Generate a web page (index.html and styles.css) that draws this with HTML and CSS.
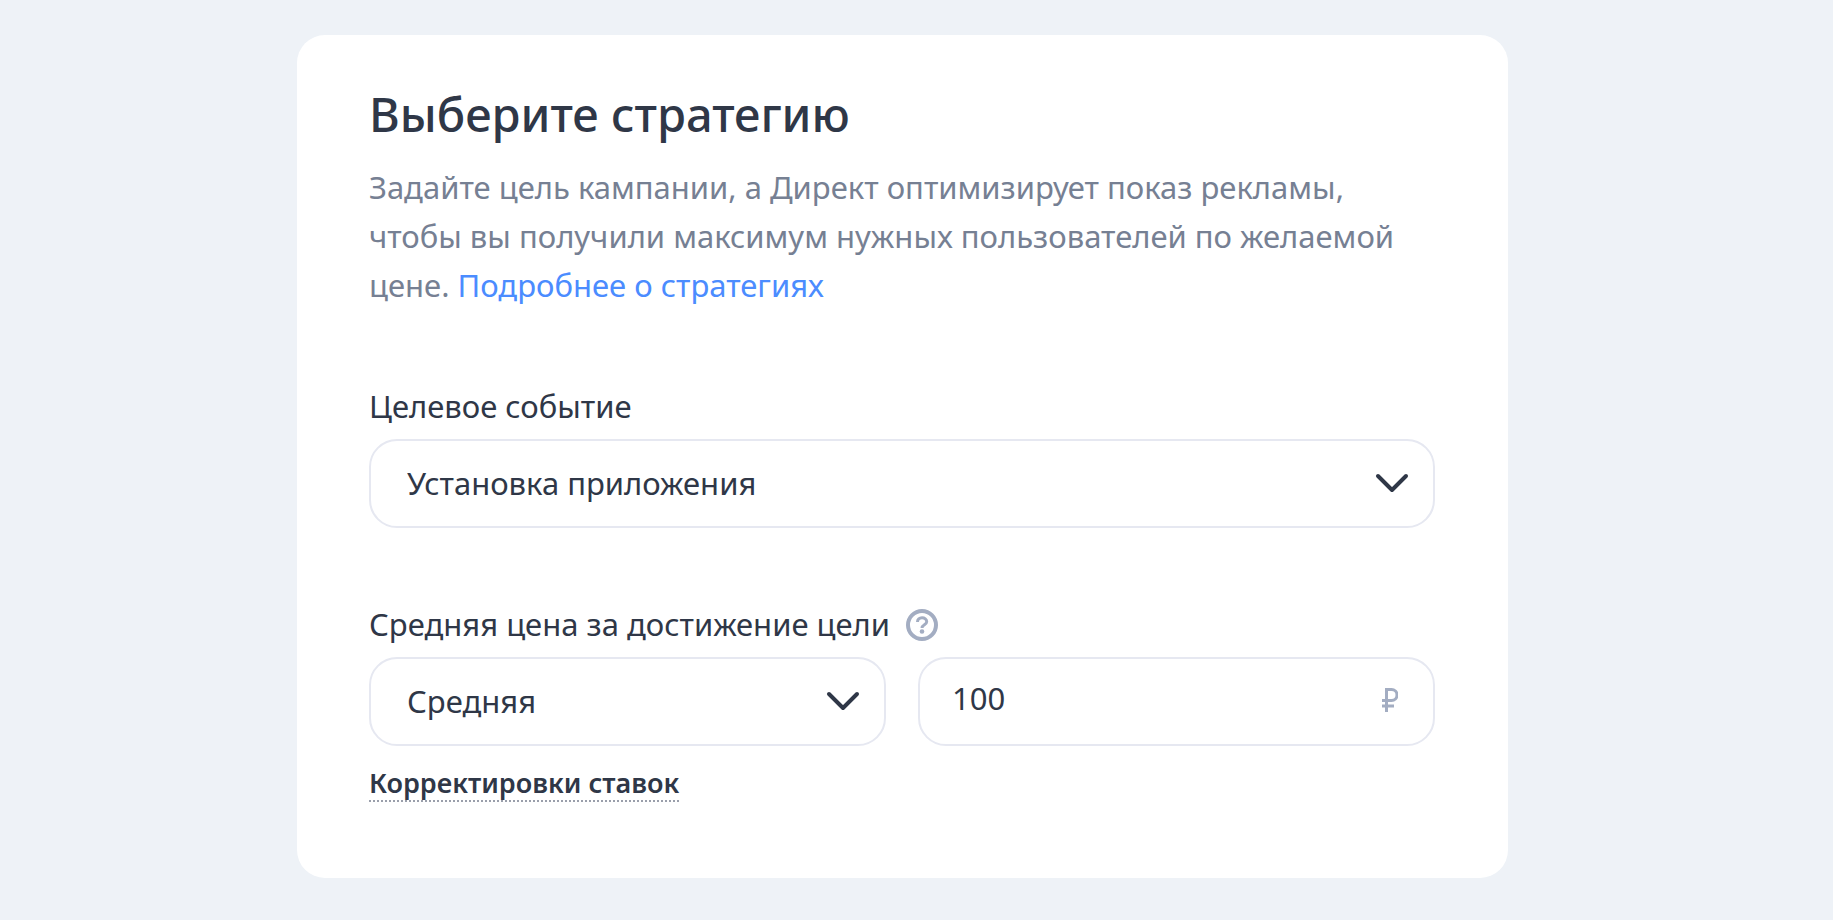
FILE: index.html
```
<!DOCTYPE html>
<html lang="ru">
<head>
    <meta charset="UTF-8">
    <meta name="viewport" content="width=device-width, initial-scale=1.0">
    <title>Выберите стратегию</title>
    <link rel="stylesheet" href="styles.css">
</head>
<body>
    <main class="card">
        <h1>Выберите стратегию</h1>
        <p class="lead">Задайте цель кампании, а Директ оптимизирует показ рекламы, чтобы вы получили максимум нужных пользователей по желаемой цене. <a href="#">Подробнее о стратегиях</a></p>

        <form>
            <div class="field">
                <div class="field-label">
                    <label for="goal">Целевое событие</label>
                </div>
                <div class="control">
                    <select id="goal">
                        <option>Установка приложения</option>
                    </select>
                    <svg class="chevron" viewBox="0 0 34 20" aria-hidden="true"><path d="M3 3l14 14L31 3"/></svg>
                </div>
            </div>

            <div class="field">
                <div class="field-label">
                    <label for="price-type">Средняя цена за достижение цели</label>
                    <button type="button" class="help" aria-label="Справка">
                        <svg viewBox="0 0 32 32" aria-hidden="true">
                            <circle cx="16" cy="16" r="14"/>
                            <path d="M11.500 13c0-2.600 1.900-4.200 4.500-4.200s4.700 1.600 4.700 4c0 3-4.700 3-4.700 6.200"/>
                            <circle class="dot" cx="16" cy="22.500" r="2.300"/>
                        </svg>
                    </button>
                </div>
                <div class="row">
                    <div class="control">
                        <select id="price-type">
                            <option>Средняя</option>
                        </select>
                        <svg class="chevron" viewBox="0 0 34 20" aria-hidden="true"><path d="M3 3l14 14L31 3"/></svg>
                    </div>
                    <div class="control">
                        <input type="text" id="price" value="100" aria-label="Цена">
                        <svg class="ruble" viewBox="0 0 16 24" aria-hidden="true"><path d="M4.500 24V1.500h5a5 5 0 0 1 0 11H0M0 18h12"/></svg>
                    </div>
                </div>
            </div>

            <a href="#" class="adjust">Корректировки ставок</a>
        </form>
    </main>
</body>
</html>
```
FILE: styles.css
```
* {
    box-sizing: border-box;
}

body {
    margin: 0;
    padding: 35px 28px 40px 0;
    background: #eef2f7;
    color: #2f3747;
    font-family: "Noto Sans", "Open Sans", sans-serif;
    font-size: 31px;
    line-height: 49px;
}

.card {
    max-width: 1211px;
    margin: 0 auto;
    padding: 48px 73px 76px 72px;
    background: #fff;
    border-radius: 28px;
}

h1 {
    margin: 0 0 18px;
    font-size: 47px;
    font-weight: 500;
    line-height: 62px;
}

.lead {
    margin: 0 0 72px;
    color: #768093;
}

.lead a {
    color: #4b8cff;
    text-decoration: none;
}

.field {
    margin-bottom: 72px;
}

.field-label {
    display: flex;
    align-items: center;
    gap: 16px;
    margin-bottom: 8px;
}

.help {
    width: 32px;
    height: 32px;
    padding: 0;
    border: none;
    background: none;
    cursor: pointer;
}

.help svg {
    display: block;
    fill: none;
    stroke: #a3adc2;
    stroke-width: 4;
}

.help path {
    stroke-width: 3;
}

.help .dot {
    fill: #a3adc2;
    stroke: none;
}

.row {
    display: grid;
    grid-template-columns: 1fr 1fr;
    gap: 32px;
}

.control {
    position: relative;
}

select,
input {
    display: block;
    width: 100%;
    height: 89px;
    padding: 0 36px;
    border: 2px solid #e6e8f1;
    border-radius: 28px;
    background: #fff;
    color: inherit;
    font: inherit;
    appearance: none;
}

input {
    padding: 0 72px 8px 32px;
}

.chevron,
.ruble {
    position: absolute;
    top: 34px;
    pointer-events: none;
    fill: none;
}

.chevron {
    right: 26px;
    width: 34px;
    height: 20px;
    stroke: #2f3747;
    stroke-width: 4;
    stroke-linecap: round;
    stroke-linejoin: round;
}

.ruble {
    top: 31px;
    right: 37px;
    width: 16px;
    height: 24px;
    stroke: #a3adc2;
    stroke-width: 3;
}

.field:last-of-type {
    margin-bottom: 20px;
}

.adjust {
    display: block;
    width: fit-content;
    border-bottom: 2px dotted #9a9fab;
    color: inherit;
    font-size: 27px;
    font-weight: 600;
    line-height: 34px;
    text-decoration: none;
}
```
